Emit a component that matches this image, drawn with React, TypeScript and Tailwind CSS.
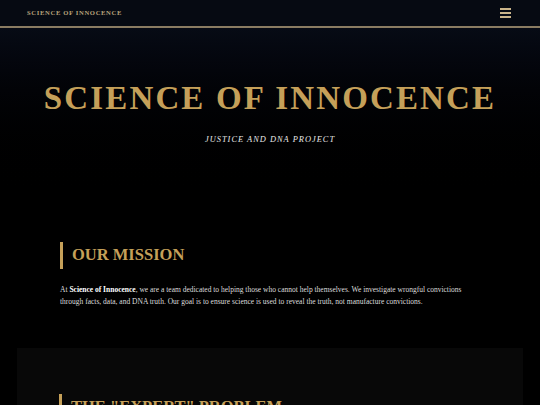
import React from "react";

const serif = { fontFamily: '"Liberation Serif", "DejaVu Serif", serif' };

export default function App() {
  return (
    <div className="min-h-[405px] bg-black text-white" style={serif}>
      <header className="h-[28px] bg-[#060a12] border-b-2 border-[#8a7c62] flex items-center justify-between pl-[27px] pr-[29px]">
        <div className="text-[6.6px] font-bold tracking-[0.1em] text-[#b9a47c]">SCIENCE OF INNOCENCE</div>
        <div className="flex flex-col gap-[2.5px] w-[11px]">
          <span className="block h-[1.5px] bg-[#c9b48a]" />
          <span className="block h-[1.5px] bg-[#c9b48a]" />
          <span className="block h-[1.5px] bg-[#c9b48a]" />
        </div>
      </header>
      <section className="h-[180px] bg-gradient-to-b from-[#070b15] to-black flex flex-col items-center pt-[52px]">
        <h1 className="text-[33px] leading-[36px] font-bold tracking-[0.065em] text-[#c5a059]">SCIENCE OF INNOCENCE</h1>
        <p className="mt-[18px] text-[8.4px] italic tracking-[0.12em] text-[#e8e8e8]">JUSTICE AND DNA PROJECT</p>
      </section>
      <section className="px-[60px] pt-[34px] pb-[40px]">
        <div className="border-l-[3px] border-[#c5a059] pl-[9px] h-[27px] flex items-center">
          <h2 className="text-[16.5px] font-bold text-[#c5a059]">OUR MISSION</h2>
        </div>
        <p className="mt-[15px] text-[7.5px] leading-[12px] text-[#dcdcdc] max-w-[408px]">
          At <strong className="text-white">Science of Innocence</strong>, we are a team dedicated to helping those who cannot help themselves. We investigate wrongful convictions through facts, data, and DNA truth. Our goal is to ensure science is used to reveal the truth, not manufacture convictions.
        </p>
      </section>
      <div className="mx-[17px] bg-[#080808] pt-[46px] px-[42px] pb-[40px]">
        <div className="border-l-[3px] border-[#c5a059] pl-[9px] h-[27px] flex items-center">
          <h2 className="text-[16.5px] font-bold text-[#c5a059]">THE "EXPERT" PROBLEM</h2>
        </div>
      </div>
    </div>
  );
}
